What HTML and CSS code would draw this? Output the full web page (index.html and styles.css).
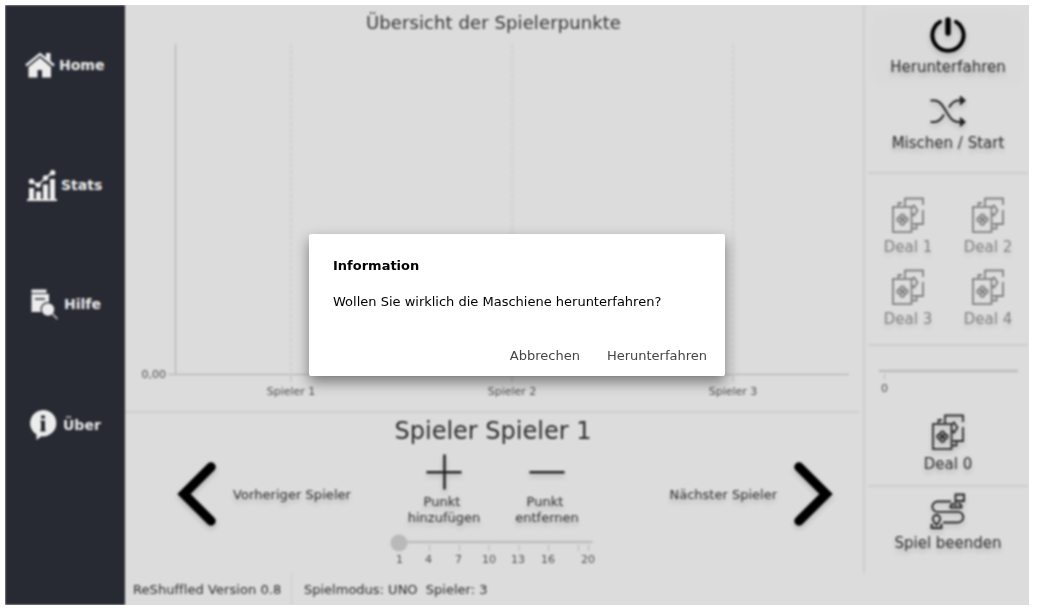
FILE: index.html
```
<!DOCTYPE html>
<html lang="de">
<head>
<meta charset="utf-8">
<title>ReShuffled</title>
<link rel="stylesheet" href="styles.css">
</head>
<body>
<svg width="0" height="0" class="defs">
  <symbol id="cards" viewBox="0 0 36 36">
    <g fill="none" stroke="currentColor" stroke-width="1.800">
      <rect x="3" y="10" width="18.500" height="25"/>
      <path d="M15 9.500V1.500h18v6.500M33 13v14h-10.500M8.500 9V6h3.500M26.500 27v4.500H22M22 10.500l2-2 3.500 5-3.500 5-2-2"/>
      <path d="M10.300 19.500a2.100 2.100 0 0 1 4.200 0v1h1a2.100 2.100 0 0 1 0 4.200h-1v1a2.100 2.100 0 0 1-4.200 0v-1h-1a2.100 2.100 0 0 1 0-4.200h1zM12.400 20v5M10 22.600h5"/>
    </g>
  </symbol>
</svg>
<div class="window">
  <div class="app">
    <nav class="sidebar">
      <a class="nav nav-home">
        <svg width="30" height="28" viewBox="0 0 30 28" fill="currentColor"><path d="M15 6.500L3.500 16v10.500h9V19h4.500v7.500h9V16z"/><path d="M1.500 14.500L15 3.500l13.500 11" fill="none" stroke="#282a33" stroke-width="4.500"/><path d="M21 2h4.500v8.500L21 6.500z"/><path d="M1 14.500L15 3l14 11.500" fill="none" stroke="currentColor" stroke-width="2.500"/></svg>
        <span>Home</span>
      </a>
      <a class="nav nav-stats">
        <svg width="30" height="32" viewBox="0 0 30 32" fill="currentColor"><path d="M0 30h30v2H0zM2 19h5v11H2zM9 22.500h5V30H9zM16 15.500h5V30h-5zM23 10h5v20h-5z"/><path d="M4.500 12.500l6.500 3.500L18.500 9 25.500 3.500" fill="none" stroke="currentColor" stroke-width="1.600"/><circle cx="4.500" cy="12.500" r="2.700"/><circle cx="11.200" cy="16" r="2.700"/><circle cx="18.500" cy="9" r="2.700"/><circle cx="25.700" cy="3.700" r="2.700"/></svg>
        <span>Stats</span>
      </a>
      <a class="nav nav-help">
        <svg width="30" height="32" viewBox="0 0 30 32" fill="currentColor"><path d="M2.500 1.500h15v3.500h-15zM2.500 6H20v9l-7 4v5H2.500z"/><path d="M6 11h10" stroke="#282a33" stroke-width="1.500"/><circle cx="19" cy="21.500" r="7.500" fill="#282a33"/><circle cx="19" cy="21.500" r="6.200"/><path d="M23.500 26l5 5" stroke="#aaacb0" stroke-width="1.800"/></svg>
        <span>Hilfe</span>
      </a>
      <a class="nav nav-about">
        <svg width="28" height="32" viewBox="0 0 28 32" fill="currentColor"><path d="M14 1a13.200 13.200 0 1 1-1.500 26.300L7.500 31V25.500A13.200 13.200 0 0 1 14 1z"/><path d="M12 6.500h4v3h-4zM11.500 11.500H16v11h-4V13h-.500zM11.500 20.500h5v2h-5z" fill="#282a33"/></svg>
        <span>Über</span>
      </a>
    </nav>
    <div class="content">
      <div class="upper">
        <main class="main">
          <svg class="chart" width="734" height="406" viewBox="125 5 734 406">
            <text class="chart-title" x="493.500" y="29" text-anchor="middle">Übersicht der Spielerpunkte</text>
            <path class="grid" d="M291 44V374M512 44V374M733 44V374"/>
            <path class="axis" d="M175.500 44V375M168 374.500H849"/>
            <path class="tick" d="M291 376v6M512 376v6M733 376v6"/>
            <g class="axis-label">
              <text x="166" y="378" text-anchor="end">0,00</text>
              <text x="291" y="395" text-anchor="middle">Spieler 1</text>
              <text x="512" y="395" text-anchor="middle">Spieler 2</text>
              <text x="733" y="395" text-anchor="middle">Spieler 3</text>
            </g>
          </svg>
          <section class="controls">
            <h2 class="player">Spieler Spieler 1</h2>
            <div class="control-row">
              <button class="step prev">
                <svg width="40" height="66" viewBox="0 0 40 66"><path d="M34 6L7 33 34 60" fill="none" stroke="#000" stroke-width="9.500" stroke-linecap="round"/></svg>
                <span>Vorheriger Spieler</span>
              </button>
              <div class="points">
                <div class="point-buttons">
                  <button class="point"><svg width="36" height="36" viewBox="0 0 36 36"><path d="M18.500 .5v35M.5 18.200h35" stroke="#222" stroke-width="2.500"/></svg><span>Punkt&nbsp;<br>hinzufügen</span></button>
                  <button class="point"><svg width="36" height="36" viewBox="0 0 36 36"><path d="M.5 18.200h35" stroke="#222" stroke-width="2.500"/></svg><span>Punkt&nbsp;<br>entfernen</span></button>
                </div>
                <svg class="slider" width="218" height="44" viewBox="384 526 218 44">
                  <path d="M399 542H592.500" stroke="#bdbdbd" stroke-width="2.500"/>
                  <path class="tick" d="M429.500 545v6M459.500 545v6M489 545v6M519 545v6M548.500 545v6M578.500 545v6M588.500 545v6"/>
                  <circle cx="399" cy="543" r="8.500" fill="#b9b9b9"/>
                  <g class="axis-label" text-anchor="middle"><text x="399.500" y="563">1</text><text x="428.500" y="563">4</text><text x="458.500" y="563">7</text><text x="489" y="563">10</text><text x="518" y="563">13</text><text x="548" y="563">16</text><text x="588" y="563">20</text></g>
                </svg>
              </div>
              <button class="step next">
                <span>Nächster Spieler</span>
                <svg width="40" height="66" viewBox="0 0 40 66"><path d="M6 6l27 27L6 60" fill="none" stroke="#000" stroke-width="9.500" stroke-linecap="round"/></svg>
              </button>
            </div>
          </section>
        </main>
        <aside class="actions">
          <div class="group group-top">
            <button class="action active"><svg width="36" height="36" viewBox="0 0 36 36" fill="none" stroke="#000" stroke-linecap="round"><path d="M10 4.800a15.600 15.600 0 1 0 16 0" stroke-width="3.900"/><path d="M18 3v13" stroke-width="5.400"/></svg><span>Herunterfahren</span></button>
            <button class="action"><svg width="36" height="36" viewBox="0 0 36 36" fill="none" stroke="#222" stroke-width="2"><path d="M.5 7.500h4C15 7.500 17 29 28 29h6M.5 29h4c5 0 7.500-4 9.500-7.500M19 14.500c2-3.500 4.500-7 9-7h6"/><path d="M30 3.500l4.500 4-4.500 4M30 25l4.500 4-4.500 4" fill="#222"/></svg><span>Mischen / Start</span></button>
          </div>
          <div class="group deals">
            <button class="action"><svg width="36" height="36"><use href="#cards"/></svg><span>Deal 1</span></button>
            <button class="action"><svg width="36" height="36"><use href="#cards"/></svg><span>Deal 2</span></button>
            <button class="action"><svg width="36" height="36"><use href="#cards"/></svg><span>Deal 3</span></button>
            <button class="action"><svg width="36" height="36"><use href="#cards"/></svg><span>Deal 4</span></button>
          </div>
          <div class="group group-deal">
            <svg class="scale" width="160" height="60" viewBox="868 346 160 60"><path d="M879 371H1018" stroke="#bdbdbd" stroke-width="2.500"/><path class="tick" d="M884.500 374v5"/><text class="axis-label" x="884.500" y="392" text-anchor="middle">0</text></svg>
            <button class="action"><svg width="36" height="36"><use href="#cards"/></svg><span>Deal 0</span></button>
          </div>
          <div class="group group-end">
            <button class="action"><svg width="36" height="36" viewBox="0 0 36 36" fill="none" stroke="#222" stroke-width="1.800"><path d="M21 8.500H7.500a5.200 5.200 0 0 0 0 10.400h20.500a5.200 5.200 0 0 1 0 10.600H13"/><path d="M25.500 13V1.500h8.500v6.500h-8M24 11h-2q-2 1-1.500 3.500h11q.500-2.500-1.500-3.500h-2"/><path d="M6.500 32c-2-2.500-3.700-4.200-3.700-6.300a3.700 3.700 0 0 1 7.400 0c0 2.100-1.700 3.800-3.700 6.300zM3 32H1.500v3h10v-3H10"/></svg><span>Spiel beenden</span></button>
          </div>
        </aside>
      </div>
      <footer class="status"><span class="version">ReShuffled Version 0.8</span><span class="mode">Spielmodus: UNO&nbsp; Spieler: 3</span></footer>
    </div>
  </div>
  <div class="dialog" role="dialog">
    <h1>Information</h1>
    <p>Wollen Sie wirklich die Maschiene herunterfahren?</p>
    <div class="dialog-buttons"><button>Abbrechen</button><button>Herunterfahren</button></div>
  </div>
</div>
</body>
</html>
```
FILE: styles.css
```
* { box-sizing: border-box; }
body { margin: 0; padding: 5px; background: #fff; font-family: "DejaVu Sans", sans-serif; font-size: 13px; color: #2c2c2c; }
svg { display: block; flex: none; }
.defs { position: absolute; }
button { border: 0; padding: 0; background: none; font: inherit; color: inherit; }
.window { position: relative; width: 1024px; height: 600px; background: #dcdcdc; overflow: hidden; }
.app { display: flex; height: 600px; filter: blur(0.9px); }

.sidebar { width: 120px; background: #282a33; color: #ececec; font-size: 14px; font-weight: bold; }
.nav { display: flex; align-items: center; height: 120px; }
.nav-home { padding-left: 20px; gap: 4px; }
.nav-stats { padding-left: 22px; gap: 4px; }
.nav-help { height: 118px; padding-left: 24px; gap: 5px; }
.nav-about { height: 124px; padding-left: 24px; gap: 6px; }

.content { width: 904px; display: flex; flex-direction: column; }
.upper { display: flex; height: 568px; }
.main { width: 738px; }
.chart-title { font-size: 18px; letter-spacing: 0.1px; fill: #333; }
.axis-label { font-size: 11px; fill: #505050; }
.axis { stroke: #bababa; stroke-width: 1.5; fill: none; }
.grid { stroke: #c8c8c8; stroke-dasharray: 4 2; fill: none; }
.tick { stroke: #b8b8b8; fill: none; }

.controls { width: 734px; height: 162px; border-top: 2px solid #cfcfcf; }
.player { margin: 0; height: 37px; padding-left: 2px; line-height: 37px; text-align: center; font-size: 24px; font-weight: normal; }
.control-row { display: grid; grid-template-columns: 259px 218px 257px; }
.step { display: flex; align-items: center; height: 88px; gap: 16px; }
.step, .point, .action { text-shadow: 0 4px 5px rgba(0,0,0,.2); }
.step svg, .point svg, .action svg { filter: drop-shadow(0 3px 2.5px rgba(0,0,0,.18)); }
.prev { padding-left: 52px; letter-spacing: 0.06px; }
.next { justify-content: flex-end; padding-right: 26px; }
.point-buttons { display: flex; height: 76px; padding: 4px 0 0 10px; gap: 3px; }
.point { display: flex; flex-direction: column; align-items: center; width: 100px; line-height: 16px; gap: 4px; }

.actions { width: 166px; padding-left: 3px; border-left: 2px solid #d0d0d0; }
.group { display: flex; flex-direction: column; align-items: center; width: 160px; border-bottom: 2px solid #cecece; }
.action { display: flex; flex-direction: column; align-items: center; width: 140px; height: 63px; font-size: 15px; line-height: 29px; white-space: nowrap; }
.group-top { height: 169px; padding-top: 12px; gap: 13px; }
.active { border-radius: 4px; background: #dadada; box-shadow: 0 0 6px 5px #dadada; }
.deals { display: grid; grid-template-columns: 80px 80px; grid-auto-rows: 63px; row-gap: 9px; height: 172px; padding-top: 23px; color: #808080; }
.deals .action { width: 80px; text-shadow: 0 4px 5px rgba(0,0,0,.1); }
.deals .action svg { filter: none; }
.group-deal { height: 141px; gap: 8px; }
.group-end { padding-top: 6px; border: 0; }

.status { display: flex; height: 32px; line-height: 33px; }
.version { width: 167px; padding-left: 8px; border-right: 1px solid #cecece; white-space: nowrap; letter-spacing: 0.06px; }
.mode { padding-left: 12px; }

.dialog { position: absolute; left: 304px; top: 229px; width: 416px; height: 142px; padding: 24px 18px 0 24px; border-radius: 2px; background: #fff; color: #000; box-shadow: 0 6px 14px rgba(0,0,0,.45); }
.dialog h1 { margin: 0; font-size: 13px; line-height: 16px; }
.dialog p { margin: 20px 0 38px; line-height: 16px; }
.dialog-buttons { display: flex; justify-content: flex-end; gap: 27px; line-height: 16px; color: #444; }
```
